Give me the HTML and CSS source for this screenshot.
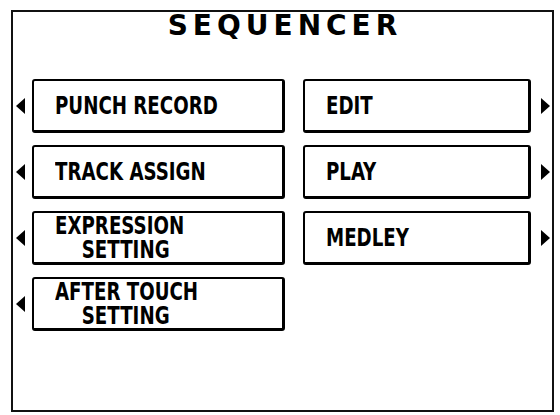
FILE: index.html
```html
<!DOCTYPE html>
<html lang="en">

<head>
  <meta charset="UTF-8">
  <title>Sequencer</title>
  <link rel="stylesheet" href="styles.css">
</head>

<body>

  <div class="screen">
    <h1 class="title">SEQUENCER</h1>

    <div class="menu">
      <div class="row">
        <span class="arrow"><svg width="10" height="16" viewBox="0 0 10 16"><polygon points="10,0 10,16 1,8" /></svg></span>
        <div class="btn left"><span class="label">PUNCH RECORD</span></div>
        <div class="btn right"><span class="label">EDIT</span></div>
        <span class="arrow arrow-r"><svg width="10" height="16" viewBox="0 0 10 16"><polygon points="0,0 0,16 9,8" /></svg></span>
      </div>

      <div class="row">
        <span class="arrow"><svg width="10" height="16" viewBox="0 0 10 16"><polygon points="10,0 10,16 1,8" /></svg></span>
        <div class="btn left"><span class="label">TRACK ASSIGN</span></div>
        <div class="btn right"><span class="label">PLAY</span></div>
        <span class="arrow arrow-r"><svg width="10" height="16" viewBox="0 0 10 16"><polygon points="0,0 0,16 9,8" /></svg></span>
      </div>

      <div class="row">
        <span class="arrow"><svg width="10" height="16" viewBox="0 0 10 16"><polygon points="10,0 10,16 1,8" /></svg></span>
        <div class="btn left">
          <span class="label two-line">
            <span>EXPRESSION</span>
            <span class="sub">SETTING</span>
          </span>
        </div>
        <div class="btn right"><span class="label">MEDLEY</span></div>
        <span class="arrow arrow-r"><svg width="10" height="16" viewBox="0 0 10 16"><polygon points="0,0 0,16 9,8" /></svg></span>
      </div>

      <div class="row">
        <span class="arrow"><svg width="10" height="16" viewBox="0 0 10 16"><polygon points="10,0 10,16 1,8" /></svg></span>
        <div class="btn left">
          <span class="label two-line">
            <span>AFTER TOUCH</span>
            <span class="sub">SETTING</span>
          </span>
        </div>
        <div class="spacer"></div>
        <span class="arrow arrow-r"></span>
      </div>
    </div>
  </div>

</body>

</html>
```

FILE: styles.css
```css
/* Page */
body {
  margin: 0;
  padding: 0;
  background: #fff;
  color: #000;
}

/* Outer LCD frame */
.screen {
  box-sizing: border-box;
  margin: 10px 0 0 11px;
  width: 543px;
  height: 402px;
  border: 2px solid #111;
  display: flex;
  flex-direction: column;
}

/* Heading */
.title {
  margin: 0;
  font-family: "DejaVu Sans", sans-serif;
  font-weight: bold;
  font-size: 28px;
  line-height: 27px;
  letter-spacing: 5px;
  text-align: center;
  padding-left: 5px;
}

/* Menu rows */
.menu {
  margin-top: 40px;
  display: flex;
  flex-direction: column;
  gap: 12px;
}

.row {
  display: flex;
  align-items: center;
  height: 54px;
}

.arrow {
  width: 19px;
  display: flex;
  justify-content: flex-start;
  padding-left: 2px;
  box-sizing: border-box;
}

.arrow-r {
  width: 21px;
  justify-content: flex-end;
  padding-left: 0;
  padding-right: 1px;
}

.arrow svg {
  display: block;
  fill: #000;
}

/* Buttons */
.btn {
  box-sizing: border-box;
  height: 54px;
  border: 2px solid #000;
  border-right-width: 3px;
  border-bottom-width: 3px;
  border-radius: 3px;
  padding-left: 21px;
  display: flex;
  align-items: center;
  font-family: "DejaVu Sans Condensed", sans-serif;
  font-weight: bold;
  font-size: 25px;
  white-space: nowrap;
}

/* LCD lettering is tall and narrow */
.label {
  display: inline-block;
  transform: scaleX(0.81);
  transform-origin: left center;
}

.left {
  width: 253px;
}

.right,
.spacer {
  width: 228px;
  margin-left: 18px;
}

.two-line {
  display: flex;
  flex-direction: column;
  line-height: 24px;
}

.two-line .sub {
  padding-left: 33px;
}
```
